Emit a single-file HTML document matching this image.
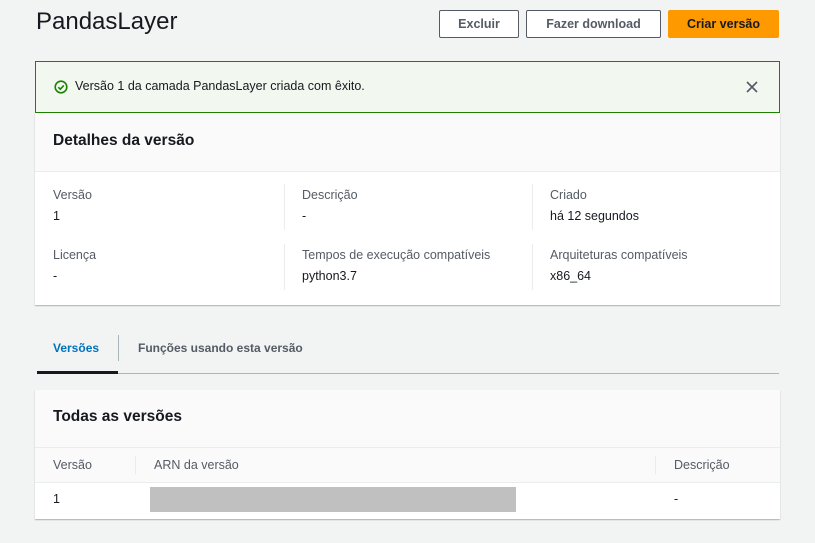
<!DOCTYPE html>
<html><head><meta charset="utf-8"><style>
body{margin:0;width:815px;height:543px;background:#f2f3f3;font-family:"Liberation Sans",sans-serif;color:#16191f;position:relative;overflow:hidden;font-size:12.5px}
.a{position:absolute}
.btn{position:absolute;top:10px;height:28px;box-sizing:border-box;border:1px solid #545b64;background:#fff;font-weight:bold;font-size:12.5px;color:#545b64;display:flex;align-items:center;justify-content:center;border-radius:2px}
.lbl{color:#545b64}
b{font-weight:bold}
</style></head><body>
<div class="a" style="left:36px;top:8px;font-size:24px;color:#16191f">PandasLayer</div>
<div class="btn" style="left:439px;width:80px">Excluir</div>
<div class="btn" style="left:526px;width:135px">Fazer download</div>
<div class="btn" style="left:668px;width:111px;background:#ff9900;border-color:#ff9900;color:#16191f">Criar versão</div>

<div class="a" style="left:35px;top:61px;width:745px;height:52px;box-sizing:border-box;border:1px solid #1d8102;background:#f2f8f0"></div>
<svg class="a" style="left:54px;top:80px" width="14" height="14" viewBox="0 0 14 14"><circle cx="7" cy="7" r="5.8" fill="none" stroke="#1d8102" stroke-width="1.6"/><path d="M4.3 7.2l2 2 3.5-3.8" fill="none" stroke="#1d8102" stroke-width="1.6"/></svg>
<div class="a" style="left:75px;top:79px;color:#16191f">Versão 1 da camada PandasLayer criada com êxito.</div>
<svg class="a" style="left:746px;top:81px" width="12" height="12" viewBox="0 0 12 12"><path d="M1 1l10 10M11 1L1 11" stroke="#545b64" stroke-width="1.6"/></svg>

<div class="a" style="left:35px;top:113px;width:745px;height:192px;background:#fff;box-shadow:0 1px 1px rgba(0,28,36,.3)"></div>
<div class="a" style="left:35px;top:113px;width:745px;height:58px;background:#fafafa;border-bottom:1px solid #eaeded"></div>
<div class="a" style="left:53px;top:132px;font-size:15.5px;font-weight:bold">Detalhes da versão</div>
<div class="a" style="left:284px;top:184px;width:1px;height:46px;background:#eaeded"></div>
<div class="a" style="left:532px;top:184px;width:1px;height:46px;background:#eaeded"></div>
<div class="a" style="left:284px;top:244px;width:1px;height:46px;background:#eaeded"></div>
<div class="a" style="left:532px;top:244px;width:1px;height:46px;background:#eaeded"></div>
<div class="a lbl" style="left:53px;top:188px">Versão</div><div class="a" style="left:53px;top:209px">1</div>
<div class="a lbl" style="left:302px;top:188px">Descrição</div><div class="a" style="left:302px;top:209px">-</div>
<div class="a lbl" style="left:550px;top:188px">Criado</div><div class="a" style="left:550px;top:209px">há 12 segundos</div>
<div class="a lbl" style="left:53px;top:248px">Licença</div><div class="a" style="left:53px;top:269px">-</div>
<div class="a lbl" style="left:302px;top:248px">Tempos de execução compatíveis</div><div class="a" style="left:302px;top:269px">python3.7</div>
<div class="a lbl" style="left:550px;top:248px">Arquiteturas compatíveis</div><div class="a" style="left:550px;top:269px">x86_64</div>

<div class="a" style="left:53px;top:341px;font-weight:bold;color:#0073bb;font-size:12px">Versões</div>
<div class="a" style="left:118px;top:335px;width:1px;height:26px;background:#aab7b8"></div>
<div class="a" style="left:138px;top:341px;font-weight:bold;color:#545b64;font-size:12px">Funções usando esta versão</div>
<div class="a" style="left:37px;top:373px;width:742px;height:1px;background:#aab7b8"></div>
<div class="a" style="left:37px;top:371px;width:81px;height:3px;background:#16191f"></div>

<div class="a" style="left:35px;top:390px;width:745px;height:129px;background:#fff;box-shadow:0 1px 1px rgba(0,28,36,.3)"></div>
<div class="a" style="left:35px;top:390px;width:745px;height:93px;background:#fafafa"></div>
<div class="a" style="left:35px;top:447px;width:745px;height:1px;background:#eaeded"></div>
<div class="a" style="left:35px;top:482px;width:745px;height:1px;background:#eaeded"></div>
<div class="a" style="left:53px;top:408px;font-size:15.5px;font-weight:bold">Todas as versões</div>
<div class="a" style="left:135px;top:456px;width:1px;height:18px;background:#eaeded"></div>
<div class="a" style="left:655px;top:456px;width:1px;height:18px;background:#eaeded"></div>
<div class="a lbl" style="left:53px;top:458px">Versão</div>
<div class="a lbl" style="left:154px;top:458px">ARN da versão</div>
<div class="a lbl" style="left:674px;top:458px">Descrição</div>
<div class="a" style="left:53px;top:492px">1</div>
<div class="a" style="left:150px;top:487px;width:366px;height:25px;background:#c0c0c0"></div>
<div class="a" style="left:674px;top:492px">-</div>
</body></html>
